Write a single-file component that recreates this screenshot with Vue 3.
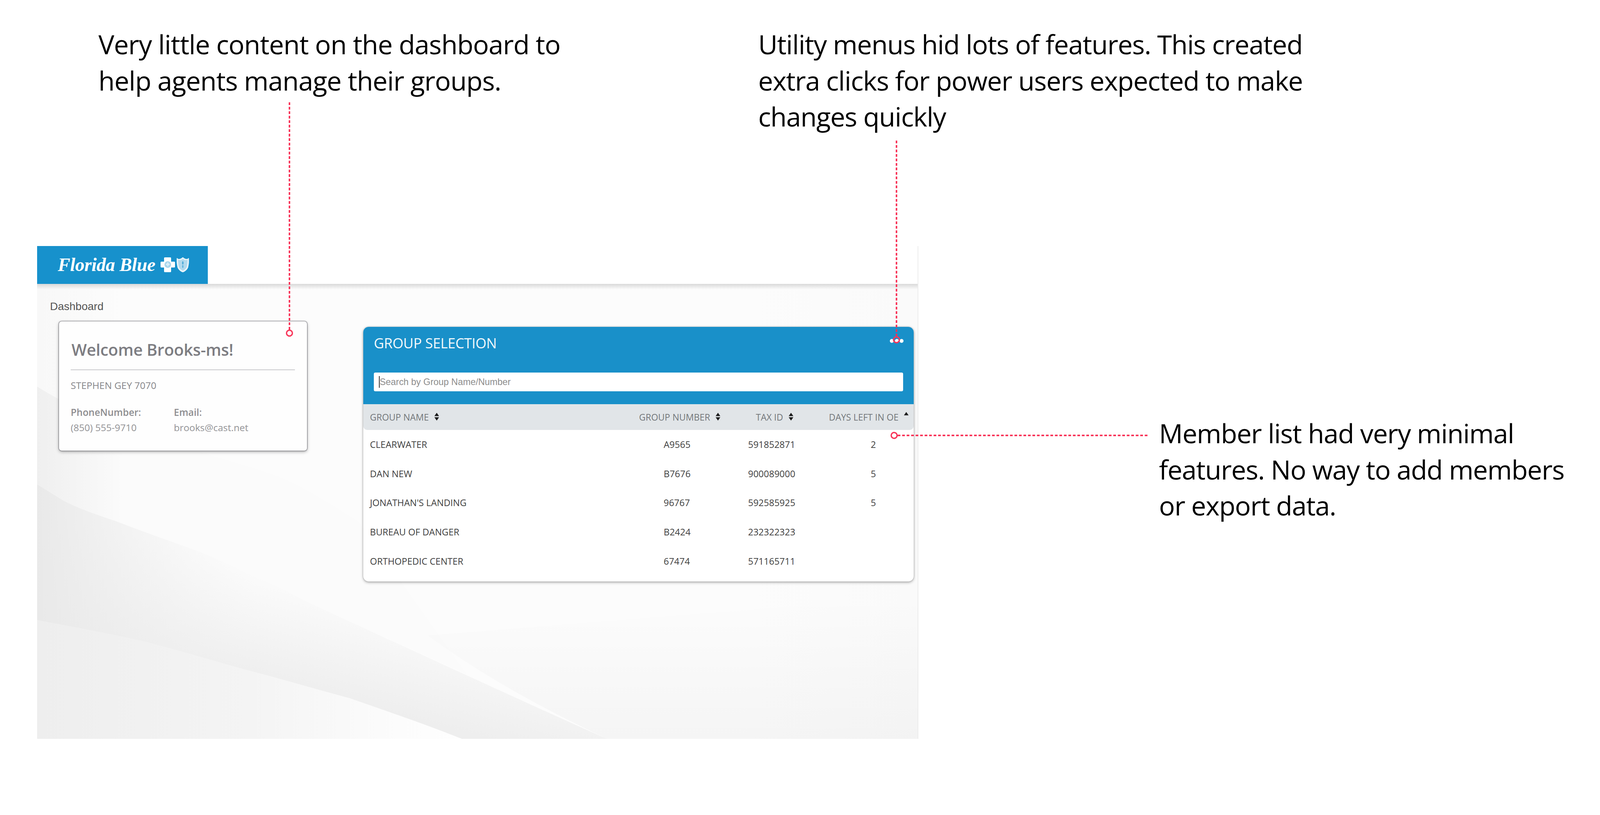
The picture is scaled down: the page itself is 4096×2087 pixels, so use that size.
<script setup>
const rows = [
  { name: 'CLEARWATER', num: 'A9565', tax: '591852871', days: '2' },
  { name: 'DAN NEW', num: 'B7676', tax: '900089000', days: '5' },
  { name: "JONATHAN'S LANDING", num: '96767', tax: '592585925', days: '5' },
  { name: 'BUREAU OF DANGER', num: 'B2424', tax: '232322323', days: '' },
  { name: 'ORTHOPEDIC CENTER', num: '67474', tax: '571165711', days: '' },
]
</script>

<template>
  <div class="page">
    <div class="left">
      <div class="notes">
        <p class="note note-a">Very little content on the dashboard to<br />help agents manage their groups.</p>
        <p class="note">Utility menus hid lots of features. This created<br />extra clicks for power users expected to make<br />changes quickly</p>
      </div>
      <div class="screen">
        <header class="topbar">
          <div class="logo">
            <span class="logo-text">Florida Blue</span>
            <svg class="logo-marks" viewBox="0 0 74 38" width="74" height="38">
              <path d="M11 0h14a2 2 0 0 1 2 2v9h8a2 2 0 0 1 2 2v11a2 2 0 0 1-2 2h-8v10a2 2 0 0 1-2 2H11a2 2 0 0 1-2-2V26H2a2 2 0 0 1-2-2V13a2 2 0 0 1 2-2h7V2a2 2 0 0 1 2-2z" fill="#fff"/>
              <circle cx="18.500" cy="18.500" r="8.500" fill="#a9d6ec"/>
              <path d="M14 16h3v-3h3v3h3v4h-3v3h-3v-3h-3z" fill="#d9eef7"/>
              <path d="M42 2q3 4 7.500 2.500Q54 3 57 0q3 3 7.500 4.500Q69 6 72 2q1 14-2 24-3 8-13 12-10-4-13-12-3-10-2-24z" fill="#e6f2f8" stroke="#fff" stroke-width="1"/>
              <path d="M45 6q3 2 6 1 4-1 6-3 2 2 6 3 3 1 6-1 0 11-2 19-3 6-10 9-7-3-10-9-2-8-2-19z" fill="#1791cc" fill-opacity=".25"/>
              <path d="M57 9q-4 6 0 10-3 4 0 9 3-5 0-9 4-4 0-10z" fill="#1791cc" fill-opacity=".65"/>
            </svg>
          </div>
        </header>
        <main class="main">
          <svg class="swoosh" viewBox="0 0 2254 1165" preserveAspectRatio="none" aria-hidden="true">
            <defs>
              <linearGradient id="base" x1="0" y1="0" x2="1" y2="0">
                <stop offset="0" stop-color="#f8f8f8"/>
                <stop offset=".1" stop-color="#fcfcfc"/>
                <stop offset=".8" stop-color="#fcfcfc"/>
                <stop offset="1" stop-color="#fafafa"/>
              </linearGradient>
              <linearGradient id="shade" gradientUnits="userSpaceOnUse" x1="0" y1="800" x2="0" y2="1165">
                <stop offset="0" stop-color="#000" stop-opacity="0"/>
                <stop offset="1" stop-color="#000" stop-opacity=".028"/>
              </linearGradient>
              <linearGradient id="upper" gradientUnits="userSpaceOnUse" x1="0" y1="0" x2="220" y2="0">
                <stop offset="0" stop-color="#efefef"/>
                <stop offset="1" stop-color="#fbfbfb"/>
              </linearGradient>
              <linearGradient id="band" gradientUnits="userSpaceOnUse" x1="800" y1="1075" x2="870" y2="800">
                <stop offset="0" stop-color="#eeeeee"/>
                <stop offset="1" stop-color="#fcfcfc"/>
              </linearGradient>
              <linearGradient id="bandLeft" gradientUnits="userSpaceOnUse" x1="0" y1="0" x2="560" y2="0">
                <stop offset="0" stop-color="#e9e9e9" stop-opacity="1"/>
                <stop offset="1" stop-color="#f2f2f2" stop-opacity="0"/>
              </linearGradient>
              <linearGradient id="wedge" x1="0" y1="0" x2="1" y2="0">
                <stop offset="0" stop-color="#eeeeee"/>
                <stop offset=".5" stop-color="#f4f4f4"/>
                <stop offset=".85" stop-color="#fcfcfc"/>
                <stop offset="1" stop-color="#fefefe"/>
              </linearGradient>
            </defs>
            <rect width="2254" height="1165" fill="url(#base)"/>
            <path d="M0 263C22 276 44 290 66 300C190 350 320 400 440 437C510 460 575 475 634 500C700 530 760 570 821 607L1100 1000L734 834C680 810 620 775 567 754C510 728 455 700 400 680C330 655 265 632 200 607C150 590 105 575 66 554C44 540 22 527 0 513Z" fill="url(#upper)"/>
            <path d="M0 513C22 527 44 540 66 554C105 575 150 590 200 607C265 632 330 655 400 680C455 700 510 728 567 754C620 775 680 810 734 834C900 910 1200 1050 1459 1165H1087C1000 1130 900 1096 800 1061C710 1037 620 1010 533 988C440 962 350 935 266 914C180 895 90 878 0 861Z" fill="url(#band)"/>
            <path d="M0 513C22 527 44 540 66 554C105 575 150 590 200 607C265 632 330 655 400 680C455 700 510 728 567 754L533 988C440 962 350 935 266 914C180 895 90 878 0 861Z" fill="url(#bandLeft)"/>
            <path d="M0 861C90 878 180 895 266 914C350 935 440 962 533 988C620 1010 710 1037 800 1061C900 1096 1000 1130 1087 1165H0Z" fill="url(#wedge)"/>
            <path d="M1459 1165C1300 1090 1150 1010 1000 900L2254 800V1165Z" fill="url(#shade)"/>
          </svg>
          <div class="crumb">Dashboard</div>
          <div class="cards">
            <section class="welcome">
              <h2 class="welcome-title">Welcome Brooks-ms!</h2>
              <div class="welcome-name">STEPHEN GEY 7070</div>
              <dl class="contact">
                <div>
                  <dt>PhoneNumber:</dt>
                  <dd>(850) 555-9710</dd>
                </div>
                <div>
                  <dt>Email:</dt>
                  <dd>brooks@cast.net</dd>
                </div>
              </dl>
            </section>
            <section class="group">
              <div class="group-head">
                <div class="group-title-row">
                  <h2 class="group-title">GROUP SELECTION</h2>
                  <div class="dots"><i></i><i></i><i></i></div>
                </div>
                <div class="search">
                  <span class="caret"></span>
                  <span class="placeholder">Search by Group Name/Number</span>
                </div>
              </div>
              <div class="thead">
                <div class="th th-name">GROUP NAME
                  <svg class="sort" viewBox="0 0 14 20" width="14" height="20"><path d="M7 0l6 8.500H1zM7 20l-6-8.500h12z" fill="#1c1c1c"/></svg>
                </div>
                <div class="th th-num">GROUP NUMBER
                  <svg class="sort" viewBox="0 0 14 20" width="14" height="20"><path d="M7 0l6 8.500H1zM7 20l-6-8.500h12z" fill="#1c1c1c"/></svg>
                </div>
                <div class="th th-tax">TAX ID
                  <svg class="sort" viewBox="0 0 14 20" width="14" height="20"><path d="M7 0l6 8.500H1zM7 20l-6-8.500h12z" fill="#1c1c1c"/></svg>
                </div>
                <div class="th th-days">DAYS LEFT IN OE
                  <svg class="sort sort-up" viewBox="0 0 14 20" width="14" height="20"><path d="M7 0l6 8.500H1z" fill="#1c1c1c"/></svg>
                </div>
              </div>
              <div v-for="r in rows" :key="r.name" class="tr">
                <div class="td td-name">{{ r.name }}</div>
                <div class="td td-num">{{ r.num }}</div>
                <div class="td td-tax">{{ r.tax }}</div>
                <div class="td td-days">{{ r.days }}</div>
              </div>
            </section>
          </div>
        </main>
      </div>
    </div>
    <aside class="right">
      <p class="note">Member list had very minimal<br />features. No way to add members<br />or export data.</p>
    </aside>
    <svg class="connectors" width="4096" height="2087" viewBox="0 0 4096 2087" aria-hidden="true">
      <g fill="none" stroke="#f8365a" stroke-width="4">
        <path d="M741 262V845M2295 360V862M2298 1115H2940" stroke-dasharray="7 4.500"/>
      </g>
      <g fill="none" stroke="#f8365a" stroke-width="3.500">
        <circle cx="741" cy="853" r="7.500"/>
        <circle cx="2295" cy="870" r="7.500"/>
        <circle cx="2289" cy="1115" r="7.500"/>
      </g>
    </svg>
  </div>
</template>

<style>
html, body { margin: 0; background: #fff; }
</style>

<style scoped>
.page {
  position: relative;
  width: 4096px;
  height: 2087px;
  display: flex;
  overflow: hidden;
  background: #fff;
  color: #000;
  font-family: "Open Sans", "Noto Sans", sans-serif;
}
.left {
  width: 2351px;
  padding-left: 95px;
  box-sizing: border-box;
  flex: none;
}
.notes {
  display: flex;
  height: 630px;
  padding: 67px 0 0 157px;
  box-sizing: border-box;
}
.note {
  margin: 0;
  font-size: 68px;
  line-height: 92.500px;
  letter-spacing: -1.25px;
  white-space: nowrap;
}
.note-a { width: 1689px; flex: none; letter-spacing: -1.05px; }
.right { padding: 1063px 0 0 616px; }

.screen {
  width: 2256px;
  height: 1262px;
  box-sizing: border-box;
  border-right: 2px solid #ececec;
  display: flex;
  flex-direction: column;
}
.topbar {
  height: 97px;
  flex: none;
  background: #fff;
}
.logo {
  width: 437px;
  height: 97px;
  background: #1791cc;
  display: flex;
  align-items: center;
  box-sizing: border-box;
  padding: 0 0 0 53px;
  color: #fff;
}
.logo-text {
  font-family: "Liberation Serif", serif;
  font-style: italic;
  font-weight: 700;
  font-size: 47.500px;
  line-height: 1;
  width: 263px;
  flex: none;
  white-space: nowrap;
  letter-spacing: -0.2px;
}
.logo-marks { flex: none; margin-top: -2px; }

.main {
  position: relative;
  flex: 1;
  min-height: 0;
  overflow: hidden;
  padding: 40px 0 0 0;
  box-sizing: border-box;
}
.main::before {
  content: "";
  position: absolute;
  z-index: 1;
  inset: 0 0 auto 0;
  height: 14px;
  background: linear-gradient(#d9d9d9, rgba(235, 235, 235, 0));
}
.swoosh {
  position: absolute;
  inset: 0;
  width: 100%;
  height: 100%;
}
.crumb {
  position: relative;
  padding-left: 33px;
  font-family: "Liberation Sans", Arial, sans-serif;
  font-size: 28px;
  line-height: 36px;
  color: #555;
}
.cards {
  position: relative;
  display: flex;
  align-items: flex-start;
  gap: 144px;
  margin: 20px 0 0 56px;
}
.welcome {
  width: 635px;
  height: 331px;
  box-sizing: border-box;
  padding: 46px 31px 0 30px;
  background: #fefefe;
  border-radius: 7px;
  box-shadow: 0 0 2px 1px rgba(70, 70, 80, .7), 0 3px 9px rgba(0, 0, 0, .35);
  color: #86868a;
}
.welcome-title {
  margin: 0;
  padding: 0 0 25px 2px;
  border-bottom: 2px solid #c9c9cc;
  font-size: 41.500px;
  line-height: 52px;
  font-weight: 600;
  color: #7d7d82;
  letter-spacing: -0.3px;
}
.welcome-name {
  margin-top: 24px;
  font-size: 24.500px;
  line-height: 30px;
}
.contact {
  display: grid;
  grid-template-columns: 264px 1fr;
  margin: 39px 0 0;
  font-size: 24.500px;
}
.contact dt {
  line-height: 30px;
  font-weight: 600;
  color: #8d8d90;
}
.contact dd {
  margin: 9px 0 0;
  line-height: 30px;
  color: #929295;
}

.group {
  width: 1409px;
  height: 652px;
  margin-top: 14px;
  background: #fff;
  border-radius: 14px;
  box-shadow: 0 3px 7px rgba(0, 0, 0, .28), 0 0 4px rgba(0, 0, 0, .22);
  overflow: hidden;
}
.group-head {
  height: 198px;
  box-sizing: border-box;
  padding: 0 27px;
  background: #1990c9;
}
.group-title-row {
  height: 117px;
  display: flex;
  justify-content: space-between;
  padding-top: 20px;
  box-sizing: border-box;
}
.group-title {
  margin: 0;
  font-size: 36px;
  line-height: 44px;
  font-weight: 400;
  color: #f2f8fb;
  letter-spacing: -0.35px;
}
.dots {
  display: flex;
  gap: 2.500px;
  margin: 11px -1px 0 0;
  height: 10px;
}
.dots i {
  width: 10px;
  height: 10px;
  border-radius: 50%;
  background: #fff;
}
.search {
  height: 48px;
  background: #fff;
  border-radius: 4px;
  display: flex;
  align-items: center;
  padding-left: 13px;
  font-family: "Liberation Sans", Arial, sans-serif;
  font-size: 23.400px;
  color: #8c8c8c;
}
.caret {
  width: 2px;
  height: 30px;
  background: #333;
}
.thead {
  height: 66px;
  display: grid;
  grid-template-columns: 706px 264px 222px 217px;
  background: #e1e5e8;
  border-radius: 0 0 10px 10px;
}
.th {
  display: flex;
  align-items: center;
  gap: 13px;
  font-size: 23px;
  color: #73777a;
  white-space: nowrap;
}
.th-name { padding-left: 17px; }
.th-tax { padding-left: 35px; }
.sort { flex: none; margin-top: -2px; }
.sort-up { margin-top: -6px; }
.tr {
  height: 74.600px;
  display: grid;
  grid-template-columns: 706px 264px 222px 217px;
  align-items: center;
  font-size: 23.500px;
  color: #404040;
  white-space: nowrap;
}
.td-name { padding-left: 17px; }
.td-num { padding-left: 63px; }
.td-tax { padding-left: 15px; }
.td-days { padding-left: 107px; }

.connectors {
  position: absolute;
  z-index: 2;
  inset: 0;
  pointer-events: none;
}
</style>
